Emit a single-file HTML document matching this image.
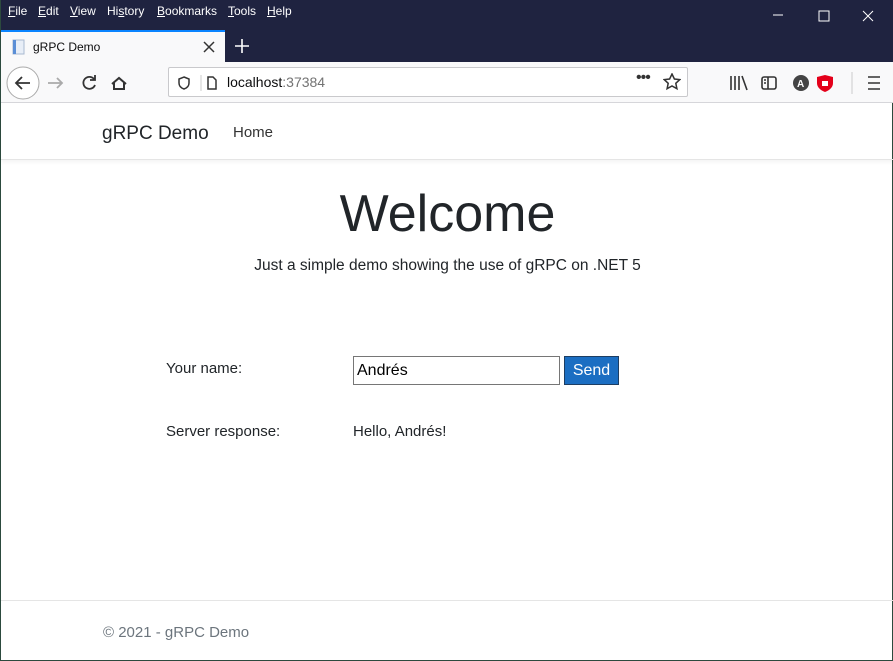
<!DOCTYPE html><html><head><meta charset="utf-8"><style>
*{margin:0;padding:0;box-sizing:border-box}
body{width:893px;height:661px;overflow:hidden;font-family:"Liberation Sans",sans-serif;background:#fff;position:relative;border:1px solid #2c4a3e;border-top:none}
.tb{position:absolute;left:0;top:0;width:893px;height:62px;background:#1f2340;color:#fff;font-size:12px}
.menu span{position:absolute;top:4px}
.tab{position:absolute;left:0;top:30px;width:224px;height:32px;background:#f9f9fa;border-top:2px solid #0a84ff;color:#0c0c0d;font-size:12px}
.tool{position:absolute;top:62px;left:0;width:893px;height:41px;background:#f9f9fa;border-bottom:1px solid #d7d7db}
.url{position:absolute;left:167px;top:5px;width:520px;height:30px;background:#fff;border:1px solid #c9c9cc;border-radius:2px;font-size:14px}
.nav{position:absolute;top:103px;left:0;width:893px;height:57px;border-bottom:1px solid #e5e5e5;box-shadow:0 2px 4px rgba(0,0,0,.05)}
.t{position:absolute;color:#212529;white-space:nowrap}
</style></head><body>
<div class="tb">
<div class="menu"><span style="left:7px"><u>F</u>ile</span><span style="left:37px"><u>E</u>dit</span><span style="left:69px"><u>V</u>iew</span><span style="left:106px">Hi<u>s</u>tory</span><span style="left:156px"><u>B</u>ookmarks</span><span style="left:227px"><u>T</u>ools</span><span style="left:266px"><u>H</u>elp</span></div>
<svg style="position:absolute;left:770px;top:8px" width="110" height="16" stroke="#fff" fill="none" stroke-width="1"><path d="M2 7h10M48 3h10v10h-10zM92 3l10 10M102 3l-10 10"/></svg>
<svg style="position:absolute;left:233px;top:38px" width="16" height="16" stroke="#fff" stroke-width="1.6"><path d="M8 1v14M1 8h14"/></svg>
</div>
<div class="tab"><svg style="position:absolute;left:11px;top:7px" width="14" height="16"><rect x="1" y="1" width="11" height="14" fill="#e8eef7" stroke="#a9b9d0"/><rect x="1" y="1" width="3" height="14" fill="#5a8ed6"/></svg><span style="position:absolute;left:32px;top:8px">gRPC Demo</span>
<svg style="position:absolute;left:202px;top:9px" width="12" height="12" stroke="#333" stroke-width="1.5"><path d="M1 1l10 10M11 1l-10 10"/></svg></div>
<div class="tool">
<svg style="position:absolute;left:3px;top:3px" width="140" height="36" fill="none" stroke="#333" stroke-width="1.8"><circle cx="19" cy="18" r="16" stroke="#aaa" stroke-width="1" fill="#fff"/><path d="M12 18h14M18 12l-6 6 6 6"/><path d="M44 18h14M53 13l5 5-5 5" stroke="#aaa"/><path d="M90 14a6 6 0 1 0 1 6M91 10v5h-5"/><path d="M108 19l7-6 7 6M110 17v7h10v-7" stroke-width="2"/></svg>
<div class="url"><svg style="position:absolute;left:8px;top:7px" width="40" height="16" fill="none" stroke="#333" stroke-width="1.5"><path d="M7 2l5 2v4c0 3-2 5-5 6-3-1-5-3-5-6V4z"/><path d="M24 0v16" stroke="#ccc" stroke-width="1"/><path d="M31 2h5l3 3v9h-8z"/></svg>
<span style="position:absolute;left:58px;top:6px;color:#0c0c0d">localhost<span style="color:#737373">:37384</span></span>
<span style="position:absolute;left:467px;top:1px;font-size:16px;color:#333;letter-spacing:-1px">•••</span>
<svg style="position:absolute;left:494px;top:5px" width="18" height="18" fill="none" stroke="#333" stroke-width="1.5"><path d="M9 1l2.4 5 5.4.6-4 3.7 1.1 5.4L9 13l-4.9 2.7 1.1-5.4-4-3.7 5.4-.6z"/></svg></div>
<svg style="position:absolute;left:725px;top:10px" width="160" height="22" fill="none" stroke="#333" stroke-width="1.6"><path d="M5 4v14M9 4v14M13 4v14M16 4l5 14"/><rect x="36" y="5" width="14" height="12" rx="2"/><path d="M42 5v12M38 8h2M38 11h2"/><circle cx="75" cy="11" r="8" fill="#444" stroke="none"/><text x="71" y="15" font-size="10" fill="#fff" stroke="none" font-family="Liberation Sans" font-weight="bold">A</text><path d="M99 3l8 2v6c0 4-3 7-8 9-5-2-8-5-8-9V5z" fill="#e4001a" stroke="none"/><rect x="96" y="9" width="6" height="5" fill="#fff" stroke="none"/><path d="M126 0v22" stroke="#ccc" stroke-width="1"/><path d="M142 5h12M142 11h12M142 17h12"/></svg>
</div>
<div class="nav"><span class="t" style="left:101px;top:20px;font-size:19px">gRPC Demo</span><span class="t" style="left:232px;top:21px;font-size:15px;color:#333">Home</span></div>
<div class="t" style="left:0;width:893px;text-align:center;top:184px;font-size:52px;font-weight:300;color:#212529">Welcome</div>
<div class="t" style="left:0;width:893px;text-align:center;top:257px;font-size:15.5px">Just a simple demo showing the use of gRPC on .NET 5</div>
<div class="t" style="left:165px;top:360px;font-size:15px">Your name:</div>
<div style="position:absolute;left:352px;top:356px;width:207px;height:29px;border:1px solid #767676;font-size:16px;padding:5px 3px;color:#000">Andrés</div>
<div style="position:absolute;left:563px;top:356px;width:55px;height:29px;background:#1b6ec2;border:1px solid #1d3e63;color:#fff;font-size:16px;text-align:center;line-height:27px">Send</div>
<div class="t" style="left:165px;top:423px;font-size:15px">Server response:</div>
<div class="t" style="left:352px;top:423px;font-size:15px">Hello, Andrés!</div>
<div style="position:absolute;left:0;top:600px;width:893px;border-top:1px solid #e5e5e5"></div>
<div class="t" style="left:102px;top:624px;font-size:15px;color:#6c757d">© 2021 - gRPC Demo</div>
</body></html>
